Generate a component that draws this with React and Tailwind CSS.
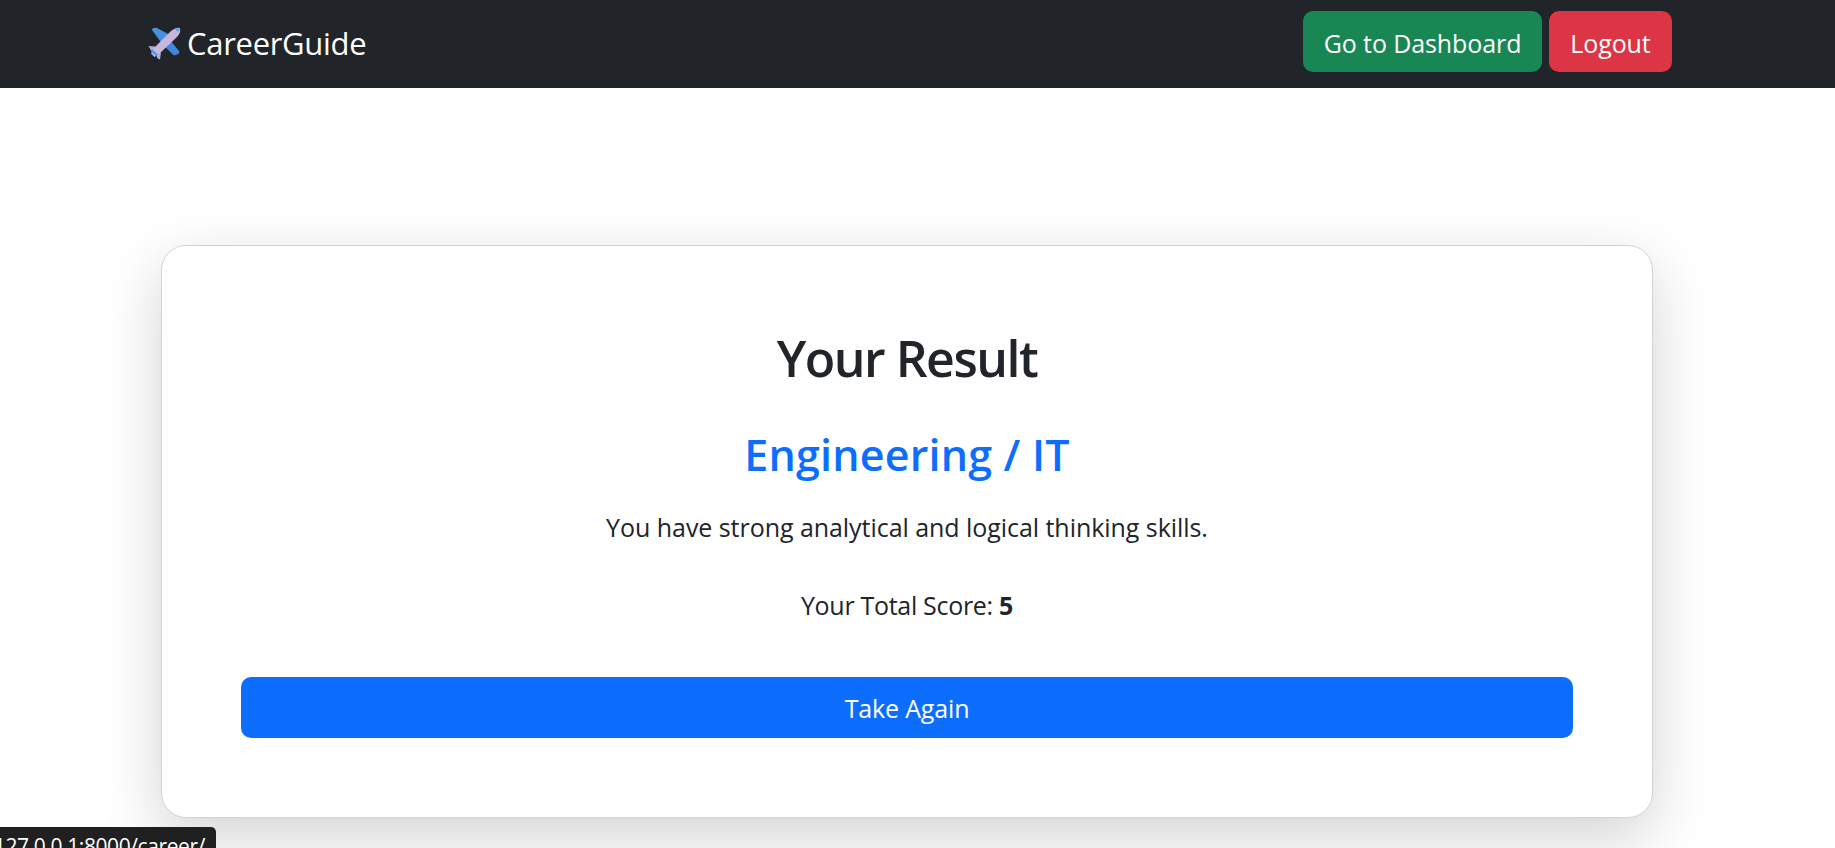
const sans = "font-['Open_Sans','Noto_Sans',sans-serif]";

function PlaneIcon() {
  return (
    <svg viewBox="0 0 33 33" className="w-[33px] h-[33px] shrink-0">
      {/* wings */}
      <path d="M4 3 C4 1.5 6 0.5 9 1 L22 8 L15 18 Z" fill="#4a90e2" />
      <path d="M22 13 L31 24 C32 26 31 27 29 27.5 L26 28.5 L16 19 Z" fill="#3f86de" />
      {/* tail fins */}
      <path d="M0.5 19 L7 19.5 L7 25 L3 23.5 Z" fill="#b9a8d2" />
      <path d="M7 25 L13 25.5 L12 32.5 L9.5 31.5 Z" fill="#b9a8d2" />
      {/* body */}
      <path d="M31.5 1 C33 3 32 7 29 10 L11 27 L6.5 30 L3 26.5 L6 21 L23 4 C26 1.5 30 0 31.5 1 Z" fill="#c6b8dd" />
      <path d="M4 23.5 L9 28.5" stroke="#4a9be8" strokeWidth="2.5" fill="none" />
      <path d="M27 1.8 L30.5 1.2 L31.5 4 L29.5 4.5 Z" fill="#4aa8e0" />
    </svg>
  );
}

export default function App() {
  return (
    <div className={`relative h-screen overflow-hidden bg-white text-[#212529] ${sans}`}>
      <nav className="h-[88px] bg-[#212529] flex items-start justify-between pl-[148px] pr-[163px] pt-[11px]">
        <a className="flex items-center gap-[6px] h-[64px] text-white text-[31px] tracking-[-0.3px]">
          <PlaneIcon />
          <span>CareerGuide</span>
        </a>
        <div className="flex items-center gap-[7px]">
          <button className="h-[61px] w-[239px] rounded-[10px] bg-[#198754] text-white text-[25px] leading-[64px] tracking-[-0.1px]">Go to Dashboard</button>
          <button className="h-[61px] w-[123px] rounded-[10px] bg-[#dc3545] text-white text-[25px] leading-[64px] tracking-[-0.1px]">Logout</button>
        </div>
      </nav>

      <main className="pt-[157px] pl-[161px] pr-[182px]">
        <div className="h-[573px] border border-[#d3d3d3] rounded-[25px] bg-white shadow-[0_20px_60px_rgba(0,0,0,0.175)] px-[79px] pt-[82px] text-center">
          <h1 className="text-[50px] leading-[60px] font-semibold tracking-[-1.5px]">Your Result</h1>
          <h2 className="mt-[41px] text-[43px] leading-[52px] font-semibold text-[#0d6efd] tracking-[0.2px]">Engineering / IT</h2>
          <p className="mt-[28px] text-[25px] leading-[37px] tracking-[-0.05px]">You have strong analytical and logical thinking skills.</p>
          <p className="mt-[41px] text-[25px] leading-[37px] tracking-[-0.3px]">Your Total Score: <b>5</b></p>
          <button className="mt-[53px] w-full h-[61px] rounded-[10px] bg-[#0d6efd] text-white text-[25px] leading-[63px] tracking-[-0.15px]">Take Again</button>
        </div>
      </main>

      {/* browser link preview */}
      <div className="absolute left-0 bottom-0 w-[216px] h-[21px] bg-[#202020] rounded-tr-[5px] text-white overflow-hidden flex justify-end pr-[11px]">
        <span className="block mt-[5px] text-[21px] leading-[28px] whitespace-nowrap tracking-[-0.4px]">127.0.0.1:8000/career/</span>
      </div>
    </div>
  );
}
